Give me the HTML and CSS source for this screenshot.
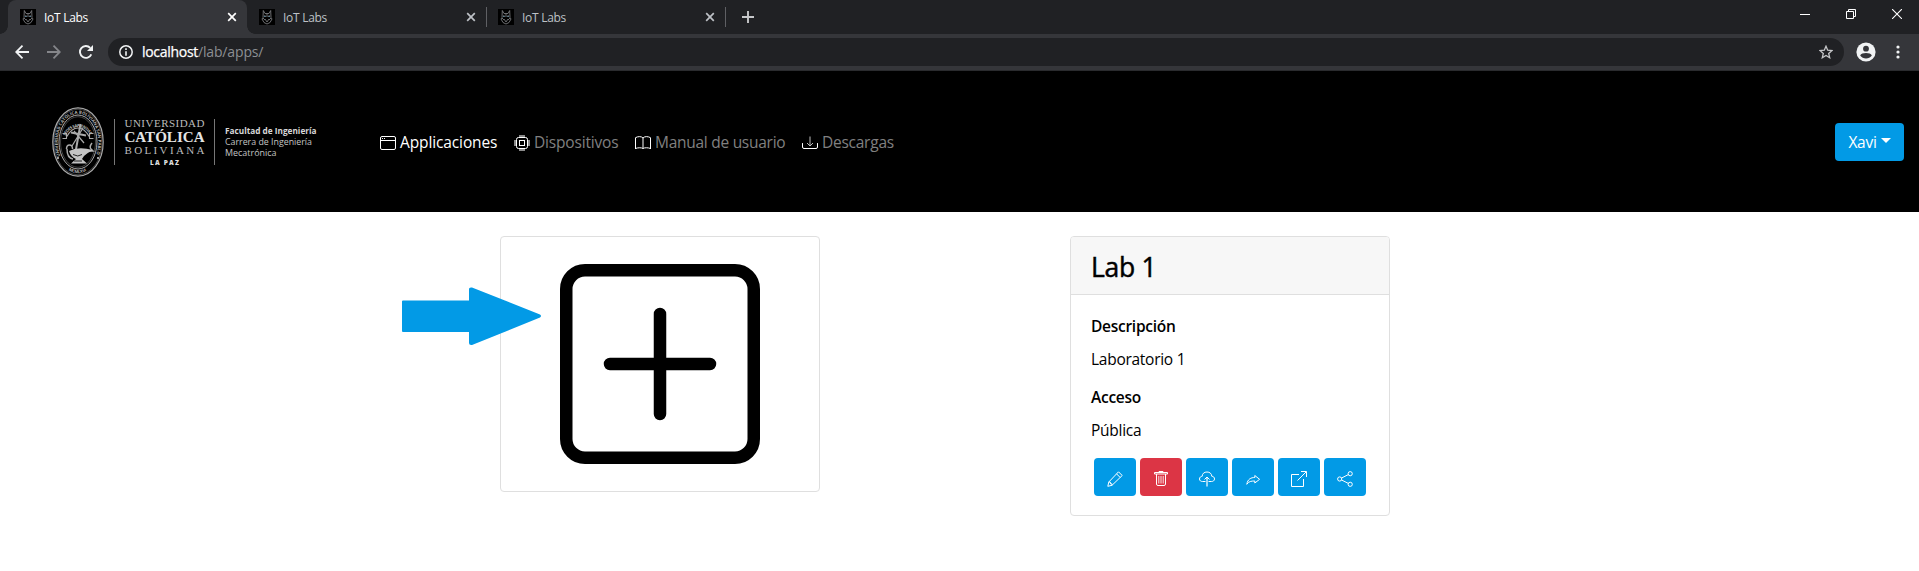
FILE: index.html
```html
<!DOCTYPE html>
<html lang="es">
<head>
<meta charset="utf-8">
<title>IoT Labs</title>
<link rel="stylesheet" href="styles.css">
</head>
<body>
<svg class="defs" width="0" height="0">
  <symbol id="wolf" viewBox="0 0 16 16">
    <rect width="16" height="16" fill="#000"/>
    <g fill="none" stroke="#77787c" stroke-width=".9">
      <path d="M4 8.500 4.300 1.500 6 4.500h4l1.700-3L12 8.500l1 1.500-2 3.500-3 1.500-3-1.500L3 10z"/>
      <path d="M5.500 6l1.500 2M10.500 6 9 8M6 10l2 3 2-3M8 5v3M4 9l2 2M12 9l-2 2"/>
    </g>
    <path d="M5 7.500h1.500M9.500 7.500H11" stroke="#547f91"/>
  </symbol>
  <symbol id="cross" viewBox="0 0 10 10"><path d="M1.200 1.200l7.600 7.600M8.800 1.200 1.200 8.800" stroke="currentColor" stroke-width="1.700"/></symbol>
</svg>
<div class="tabstrip">
  <div class="tab active"><svg class="fav"><use href="#wolf"/></svg><span>IoT Labs</span><svg class="close"><use href="#cross"/></svg></div>
  <div class="tab"><svg class="fav"><use href="#wolf"/></svg><span>IoT Labs</span><svg class="close"><use href="#cross"/></svg></div>
  <div class="tab divided"><svg class="fav"><use href="#wolf"/></svg><span>IoT Labs</span><svg class="close"><use href="#cross"/></svg></div>
  <div class="newtab"><svg width="12" height="12" viewBox="0 0 12 12"><path d="M6 0v12M0 6h12" stroke="#c7c8ca" stroke-width="1.900"/></svg></div>
  <div class="winbtns">
    <svg width="10" height="10"><path d="M0 5.500h10" stroke="#fff"/></svg>
    <svg width="10" height="10" fill="none" stroke="#fff"><path d="M.5 2.500h7v7h-7zM2.500 2.500v-2h7v7h-2"/></svg>
    <svg width="10" height="10"><path d="M0 0l10 10M10 0 0 10" stroke="#fff" stroke-width="1.100"/></svg>
  </div>
</div>
<div class="toolbar">
  <svg class="tool back" viewBox="0 0 14 14"><path d="M14 7H1.500M7.500.7 1.200 7l6.300 6.300" fill="none" stroke="#f1f3f4" stroke-width="1.800"/></svg>
  <svg class="tool forward" viewBox="0 0 14 14"><path d="M0 7h12.500M6.500.7 12.800 7l-6.300 6.300" fill="none" stroke="#85868a" stroke-width="1.800"/></svg>
  <svg class="tool reload" viewBox="0 0 14 14"><path d="M12.300 9.300A5.900 5.900 0 1 1 11.200 2.900" fill="none" stroke="#f1f3f4" stroke-width="1.900"/><path d="M14 0v6H8z" fill="#f1f3f4"/></svg>
  <div class="address">
    <svg class="info" viewBox="0 0 14 14"><circle cx="7" cy="7" r="6.200" fill="none" stroke="#f1f3f4" stroke-width="1.500"/><path d="M7 6.200v4.500M7 3.300v1.600" stroke="#f1f3f4" stroke-width="1.600"/></svg>
    <span class="url"><b>localhost</b>/lab/apps/</span>
    <svg class="star" viewBox="0 0 14 14"><path d="M7 1.200l1.700 4 4.300.4-3.300 2.800 1 4.300L7 10.400l-3.700 2.300 1-4.300L1 5.600l4.300-.4z" fill="none" stroke="#c6c7c9" stroke-width="1.300"/></svg>
  </div>
  <svg class="profile" viewBox="0 0 20 20"><circle cx="10" cy="10" r="9.600" fill="#f1f3f4"/><circle cx="10" cy="6.700" r="2.900" fill="#35363a"/><path d="M4.200 13.400c1.300-3.200 10.300-3.200 11.600 0-2.500 4-9.100 4-11.600 0z" fill="#35363a"/></svg>
  <svg class="dots" viewBox="0 0 4 14" fill="#f1f3f4"><circle cx="2" cy="2" r="1.600"/><circle cx="2" cy="7" r="1.600"/><circle cx="2" cy="12" r="1.600"/></svg>
</div>
<header class="navbar">
  <div class="brand">
    <svg class="seal" viewBox="0 0 52 70">
      <defs>
        <path id="ring" d="M8.450 49A20.200 28.300 0 1 1 43.550 49"/>
        <path id="ring2" d="M13.500 29A15 20 0 0 1 38.500 29"/>
        <path id="ring3" d="M16.500 63.200A22.300 31.200 0 0 0 35.500 63.200"/>
      </defs>
      <g fill="none" stroke="#aaa">
        <ellipse cx="26" cy="35" rx="25.200" ry="34.200" stroke-width="1.200"/>
        <ellipse cx="26" cy="35" rx="24" ry="32.800" stroke-width=".4"/>
        <ellipse cx="26" cy="35" rx="19" ry="27" stroke-width="1"/>
        <ellipse cx="26" cy="35" rx="17.500" ry="25.300" stroke-width=".4"/>
        <path d="M10.500 26.500h4v5h-4M41.500 26.500h-4v5h4M14.500 30q5-9 11.500-9t11.500 9" stroke-width="1.100"/>
        <path d="M28.500 17 23 48M19 25.500l15 3" stroke-width="2"/>
        <path d="M20 39 31 21M32 36 22 24" stroke-width="1.200"/>
        <path d="M14.500 42q0-4 3-4t3 4M15 42q0 9 6 10M33 44h8l-2-2q-2-2 1-6" stroke-width="1.500"/>
      </g>
      <path d="M17 44q9-5 24-1-6 3-9 6l-2 3 5 4.500H19l5-4.500q-5-2-7-8z" fill="#c4c4c4"/>
      <path d="M21 47.500q5 3 9 0M22 54h8" stroke="#222" fill="none"/>
      <g fill="#b5b5b5" class="sealtext">
        <text textLength="103"><textPath href="#ring">UNIVERSIDAD CATOLICA BOLIVIANA SAN PABLO</textPath></text>
        <text textLength="31"><textPath href="#ring2">SEDES SAPIENTIAE</textPath></text>
        <text textLength="19"><textPath href="#ring3">MCMLXVI</textPath></text>
      </g>
      <circle cx="6" cy="51" r="1" fill="#ccc"/><circle cx="46" cy="51" r="1" fill="#ccc"/>
    </svg>
    <svg class="uni" viewBox="0 0 102 48">
      <path d="M.5 1v46M100.500 1v46" stroke="#777"/>
      <text class="u1" x="10.500" y="8.500" textLength="80">UNIVERSIDAD</text>
      <text class="u2" x="10.500" y="23.500" textLength="80" lengthAdjust="spacingAndGlyphs">CATÓLICA</text>
      <text class="u1" x="10.500" y="36" textLength="80">BOLIVIANA</text>
      <text class="u4" x="36" y="47" textLength="29">LA PAZ</text>
    </svg>
    <svg class="faculty" viewBox="0 0 100 48">
      <text class="f1" x="0" y="15.500" textLength="91.500" lengthAdjust="spacingAndGlyphs">Facultad de Ingeniería</text>
      <text x="0" y="27" textLength="87" lengthAdjust="spacingAndGlyphs">Carrera de Ingeniería</text>
      <text x="0" y="38" textLength="51.500" lengthAdjust="spacingAndGlyphs">Mecatrónica</text>
    </svg>
  </div>
  <nav class="menu">
    <a class="current"><svg class="ic" viewBox="0 0 16 16" fill="none" stroke="#fff"><rect x=".5" y="1.500" width="15" height="13" rx="1.500"/><path d="M0 5.500h16M2 3.500h1M4 3.500h1"/></svg><span class="m1">Applicaciones</span></a>
    <a><svg class="ic" viewBox="0 0 16 16" fill="none" stroke="#fff"><path d="M5 .5h6M5 1.500h6M5 14.500h6M5 15.500h6M.5 5v6M1.500 5v6M14.500 5v6M15.500 5v6" stroke="#8a8a8a"/><rect x="2.500" y="2.500" width="11" height="11" rx="2" fill="#000"/><rect x="5.500" y="5.500" width="5" height="5"/></svg><span class="m2">Dispositivos</span></a>
    <a><svg class="ic" viewBox="0 0 16 16" fill="none" stroke="#fff"><path d="M8 3v10.500M.5 14V2.700C3 1.200 6.500 1.200 8 3c1.500-1.800 5-1.800 7.500-.3V14M.5 13.500c2.500-1 6-1 7.500 0 1.500-1 5-1 7.500 0"/></svg><span class="m3">Manual de usuario</span></a>
    <a><svg class="ic" viewBox="0 0 16 16" fill="none" stroke="#fff"><path d="M.5 8.500v3.500q0 1.500 1.500 1.500h12q1.500 0 1.500-1.500V8.500" stroke-linecap="round"/><path d="M8 1.500v9.500M5 8l3 3 3-3" stroke="#bbb"/></svg><span class="m4">Descargas</span></a>
  </nav>
  <button class="user"><span>Xavi</span><i></i></button>
</header>
<main class="cards">
  <svg class="pointer" viewBox="0 0 140 60"><path d="M2 13.500h66V2q0-2 3-1.500l68 27q2 1.500 0 3l-68 27.500q-3 .5-3-2V45H2q-1 0-1-1V14.500q0-1 1-1z" fill="#029ae6"/></svg>
  <section class="col">
    <div class="card add"><svg viewBox="0 0 16 16" width="200" height="200"><rect x=".5" y=".5" width="15" height="15" rx="1.500" fill="none" stroke="#000"/><path d="M8 4v8M4 8h8" stroke="#000" stroke-linecap="round"/></svg></div>
  </section>
  <section class="col">
    <div class="card lab">
      <h3><span>Lab 1</span></h3>
      <div class="body">
        <p><b>Descripción</b></p>
        <p><span>Laboratorio 1</span></p>
        <p class="gap"><b>Acceso</b></p>
        <p><span>Pública</span></p>
        <div class="actions">
          <button><svg class="ic" viewBox="0 0 16 16"><path d="M11.500.8 15.200 4.500 5 14.300.8 15.300 1.800 11zM9.500 2.800l3.700 3.700M1.800 11l1.700.3v1.500h1.400V14.300"/></svg></button>
          <button class="danger"><svg class="ic" viewBox="0 0 16 16"><path d="M1.500 1.500h13v1.500h-13zM6 1.500v-1h4v1M3.500 3v10q0 1.500 1.500 1.500h6q1.500 0 1.500-1.500V3"/><path d="M5.800 5v7.500M8 5v7.500M10.200 5v7.500" stroke-opacity=".85"/></svg></button>
          <button><svg class="ic" viewBox="0 0 16 16"><path d="M6.500 10.500h-3C2 10.500.5 9.800.5 8S2 5.300 3.200 5.300C3.300 2.500 5.200 1 8 1s4.500 1.500 4.800 4.300c1.500 0 2.700 1 2.700 2.700s-1.500 2.500-3 2.500h-3M5.500 8.500 8 6l2.500 2.500"/><path d="M8 15.500V6.500" stroke-width="1.500" stroke-opacity=".8"/></svg></button>
          <button><svg class="ic" viewBox="0 0 16 16"><path d="M9.800 4.500v2C6 6.500 2.700 8 1.800 13.300c2-3 4.500-3.300 8-3.300v2l4.800-3.700z"/></svg></button>
          <button><svg class="ic" viewBox="0 0 16 16"><path d="M8 3.500H.5v12h12V8M6.500 9.500 15.300.7M10 .5h5.500V6"/></svg></button>
          <button><svg class="ic" viewBox="0 0 16 16"><circle cx="2.700" cy="8" r="2.100"/><circle cx="13.200" cy="2.700" r="2.100"/><circle cx="13.200" cy="13.300" r="2.100"/><path d="M4.600 7 11.300 3.600M4.600 9l6.700 3.400"/></svg></button>
        </div>
      </div>
    </div>
  </section>
</main>
</body>
</html>
```
FILE: styles.css
```css
* { box-sizing: border-box; }
body { margin: 0; width: 1919px; height: 571px; overflow: hidden; background: #fff; color: #000; font-family: "Open Sans", "Noto Sans", sans-serif; font-size: 15.5px; }
svg { display: block; flex: none; }
button { border: 0; padding: 0; font: inherit; }
span, b { white-space: nowrap; }
.defs { position: absolute; }

.tabstrip { display: flex; height: 34px; background: #202124; padding-left: 8px; }
.tab { display: flex; align-items: center; width: 239px; height: 34px; padding: 0 10px 0 12px; color: #bdc1c6; font-size: 12px; }
.tab.active { position: relative; background: #35363a; color: #fff; border-radius: 8px 8px 0 0; }
.tab.active::before, .tab.active::after { content: ""; position: absolute; bottom: 0; width: 8px; height: 8px; }
.tab.active::before { left: -8px; background: radial-gradient(circle at 0 0, #202124 7.5px, #35363a 8px); }
.tab.active::after { right: -8px; background: radial-gradient(circle at 100% 0, #202124 7.5px, #35363a 8px); }
.tab span { margin-left: 8px; flex: 1; letter-spacing: -.28px; }
.divided, .newtab { background: linear-gradient(#5f6064, #5f6064) left 7px / 1px 20px no-repeat; }
.fav { width: 16px; height: 16px; }
.close { width: 10px; height: 10px; }
.newtab { height: 34px; padding: 11px 0 0 17px; }
.winbtns { display: flex; gap: 36px; margin: 9px 17px 0 auto; }

.toolbar { display: flex; align-items: center; height: 37px; padding: 0 19px 1px 15px; background: #35363a; border-bottom: 1px solid #2a2b2e; }
.tool { width: 14px; height: 14px; margin-right: 18px; }
.reload { margin-right: 15px; }
.address { display: flex; align-items: center; flex: 1; height: 28px; border-radius: 14px; background: #202124; padding: 0 11px; font-size: 14px; }
.info { width: 14px; height: 14px; margin-right: 9px; }
.url { flex: 1; color: #8c8f93; letter-spacing: -.15px; }
.url b { color: #fff; font-weight: 400; letter-spacing: -.3px; -webkit-text-stroke: .25px #fff; }
.star { width: 14px; height: 14px; }
.profile { width: 20px; height: 20px; margin: 0 20px 0 12px; }
.dots { width: 4px; height: 14px; }

.navbar { display: flex; align-items: center; height: 141px; background: #000; padding: 0 15px 0 52px; }
.brand { display: flex; align-items: center; width: 328px; padding-top: 1px; }
.seal { width: 52px; height: 70px; overflow: visible; }
.sealtext { font: 700 4.2px "Open Sans", sans-serif; }
.uni { width: 102px; height: 48px; margin-left: 10px; font-family: "Liberation Serif", serif; fill: #bbb; overflow: visible; }
.u1 { font-size: 11px; }
.u2 { font-size: 15.5px; font-weight: 700; fill: #e4e4e4; }
.u4 { font: 800 6.5px "Open Sans", sans-serif; fill: #ddd; }
.faculty { width: 100px; height: 48px; margin-left: 9px; font: 9.5px "Open Sans", sans-serif; fill: #c4c4c4; overflow: visible; }
.f1 { font-weight: 700; fill: #d8d8d8; }
.menu { display: flex; gap: 16px; }
.menu a { display: flex; align-items: center; gap: 4px; height: 24px; color: #808080; }
.menu .current { color: #fff; }
.menu span { padding-top: 1px; }
.menu .ic { margin-top: 3px; }
.m1 { width: 98px; letter-spacing: -.12px; }
.m2 { width: 85px; letter-spacing: -.18px; }
.m3 { width: 131px; letter-spacing: -.27px; }
.m4 { letter-spacing: -.25px; }
.ic { width: 16px; height: 16px; }
.user { display: flex; align-items: center; justify-content: center; width: 69px; height: 38px; margin-left: auto; border-radius: 4px; background: #029ae6; color: #fff; gap: 4px; }
.user span { letter-spacing: -.25px; padding-top: 1px; }
.user i { border: solid transparent; border-width: 5px 5px 0; border-top-color: #fff; margin-top: -2px; }

.cards { position: relative; display: flex; justify-content: center; gap: 250px; padding: 24px 29px 0 0; }
.pointer { position: absolute; left: 401px; top: 75px; width: 140px; height: 60px; }
.card { width: 320px; border: 1px solid #dfdfdf; border-radius: 4px; overflow: hidden; }
.add { display: flex; justify-content: center; height: 256px; padding-top: 27px; }
.lab { height: 280px; }
.lab h3 { display: flex; align-items: center; margin: 0; height: 58px; padding: 2px 20px 0; background: #f7f7f7; border-bottom: 1px solid #dfdfdf; font-size: 26.5px; font-weight: 500; letter-spacing: -.3px; -webkit-text-stroke: .5px #000; }
.body { padding: 19px 20px; letter-spacing: -.27px; }
.body p { margin: 0 0 9px; line-height: 24px; }
.body .gap { margin-top: 14px; }
.body b { font-weight: 600; }
.actions { display: flex; gap: 4px; padding: 7px 0 0 3px; }
.actions button { display: flex; align-items: center; justify-content: center; width: 42px; height: 38px; padding-top: 3px; border-radius: 4px; background: #029ae6; }
.actions .danger { background: #dc3545; }
.actions .ic { fill: none; stroke: #fff; stroke-width: 1; }
```
